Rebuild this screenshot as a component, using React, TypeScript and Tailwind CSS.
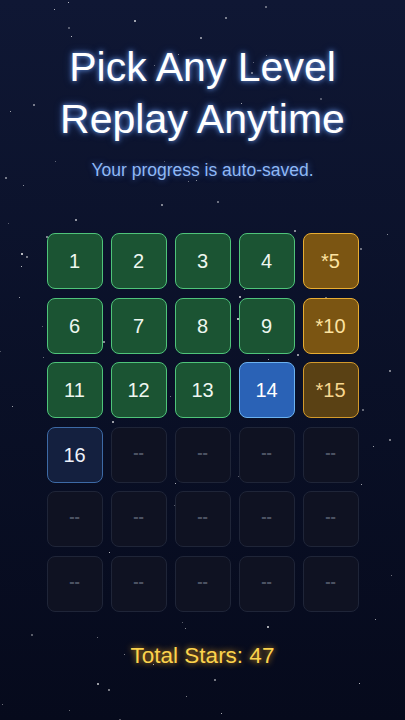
const STAR_SEED = 7

function makeStars(count: number) {
  let s = STAR_SEED
  const rand = () => {
    s = (s * 9301 + 49297) % 233280
    return s / 233280
  }
  const stars = []
  for (let i = 0; i < count; i++) {
    stars.push({
      x: rand() * 405,
      y: rand() * 720,
      size: rand() < 0.35 ? 2 : 1,
      opacity: 0.4 + rand() * 0.55,
    })
  }
  return stars
}

const stars = makeStars(120)

type Level = { label: string; kind: 'done' | 'star' | 'starDim' | 'current' | 'open' | 'locked' }

const levels: Level[] = [
  { label: '1', kind: 'done' },
  { label: '2', kind: 'done' },
  { label: '3', kind: 'done' },
  { label: '4', kind: 'done' },
  { label: '*5', kind: 'star' },
  { label: '6', kind: 'done' },
  { label: '7', kind: 'done' },
  { label: '8', kind: 'done' },
  { label: '9', kind: 'done' },
  { label: '*10', kind: 'star' },
  { label: '11', kind: 'done' },
  { label: '12', kind: 'done' },
  { label: '13', kind: 'done' },
  { label: '14', kind: 'current' },
  { label: '*15', kind: 'starDim' },
  { label: '16', kind: 'open' },
  ...Array.from({ length: 14 }, () => ({ label: '--', kind: 'locked' as const })),
]

const tileStyles: Record<Level['kind'], string> = {
  done: 'bg-[#1b5433] border-[#4fc47a] text-[#eef7f0]',
  star: 'bg-[#7b5512] border-[#e8ad32] text-[#fde3a0]',
  starDim: 'bg-[#5a4114] border-[#d39a2c] text-[#f7d78f]',
  current: 'bg-[#2a62b6] border-[#6cb2f0] text-white',
  open: 'bg-[#14203f] border-[#3d6aa6] text-[#eef2fa]',
  locked: 'bg-[#0f1222] border-[#1f2538] text-[#4c5263]',
}

function LevelTile({ level }: { level: Level }) {
  return (
    <div
      className={`w-[56px] h-[56px] rounded-[8px] border-[1.5px] flex items-center justify-center ${tileStyles[level.kind]} ${
        level.kind === 'locked' ? 'text-[16px] font-bold pb-[4px]' : 'text-[20px]'
      }`}
    >
      {level.label}
    </div>
  )
}

export default function App() {
  return (
    <div
      className="relative w-[405px] h-[720px] overflow-hidden bg-gradient-to-b from-[#0f1734] to-[#060a1c]"
      style={{ fontFamily: '"Liberation Sans", Arial, sans-serif' }}
    >
      {stars.map((star, i) => (
        <div
          key={i}
          className="absolute rounded-full bg-white"
          style={{ left: star.x, top: star.y, width: star.size, height: star.size, opacity: star.opacity }}
        />
      ))}

      <div className="relative flex flex-col items-center pt-[41px]">
        <h1 className="text-[41px] leading-[52px] text-white text-center [text-shadow:0_0_5px_rgba(120,170,255,0.85),0_0_10px_rgba(80,140,255,0.4)]">
          Pick Any Level
          <br />
          Replay Anytime
        </h1>
        <p className="mt-[13px] text-[17.5px] leading-[24px] text-[#8fb8f5] [text-shadow:0_0_6px_rgba(80,140,255,0.6)]">
          Your progress is auto-saved.
        </p>

        <div className="mt-[51px] grid grid-cols-5 gap-x-[8px] gap-y-[8.5px]">
          {levels.map((level, i) => (
            <LevelTile key={i} level={level} />
          ))}
        </div>

        <p className="mt-[30px] text-[22.5px] leading-[28px] text-[#fcd34d] [text-shadow:0_0_6px_rgba(245,170,30,0.9)]">
          Total Stars: 47
        </p>
      </div>
    </div>
  )
}
